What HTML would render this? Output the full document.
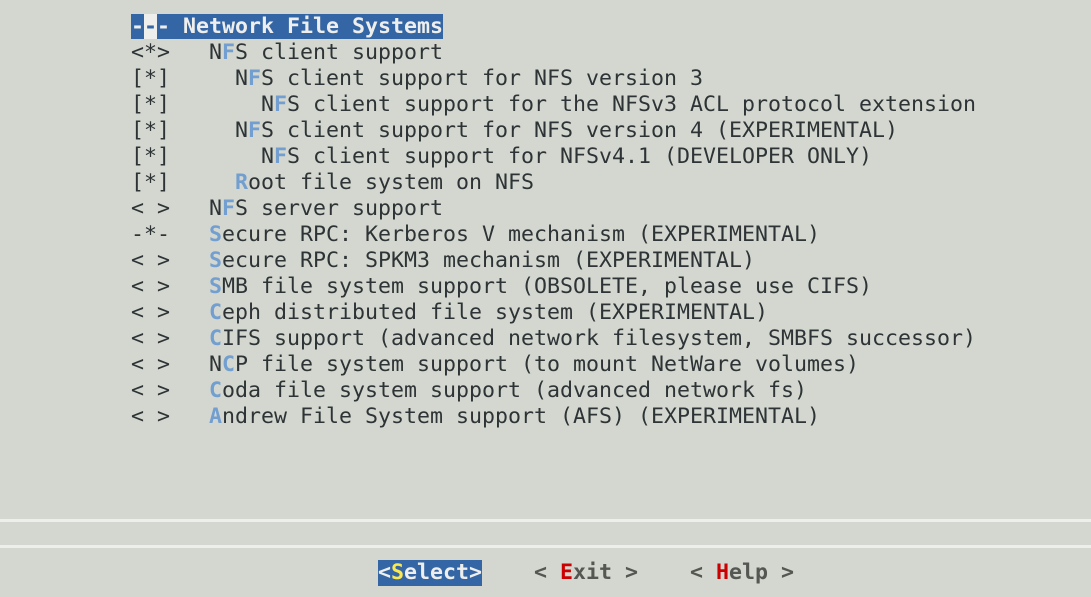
<!DOCTYPE html>
<html><head><meta charset="utf-8"><style>
html,body{margin:0;padding:0;}
body{width:1091px;height:597px;background:#d3d7cf;position:relative;overflow:hidden;font-family:"DejaVu Sans Mono","Liberation Mono",monospace;font-size:21.6px;color:#2e3436;}
pre{margin:0;position:absolute;left:131px;top:14px;font:inherit;line-height:26px;}
.k{color:#729fcf;font-weight:bold;}
.hl{background:#3465a4;color:#eeeeec;font-weight:bold;}
.cur{background:#eeeeec;color:#3465a4;}
.line{position:absolute;left:0;width:1091px;height:3px;background:#eeeeec;}
.btn{position:absolute;top:560px;line-height:26px;font-weight:bold;white-space:pre;}
.sel{background:#3465a4;color:#eeeeec;}
.y{color:#fce94f;}
.r{color:#cc0000;}
.g{color:#555753;}
</style></head><body>
<pre><span class="hl">-<span class="cur">-</span>- Network File Systems</span>
&lt;*&gt;   N<span class="k">F</span>S client support
[*]     N<span class="k">F</span>S client support for NFS version 3
[*]       N<span class="k">F</span>S client support for the NFSv3 ACL protocol extension
[*]     N<span class="k">F</span>S client support for NFS version 4 (EXPERIMENTAL)
[*]       N<span class="k">F</span>S client support for NFSv4.1 (DEVELOPER ONLY)
[*]     <span class="k">R</span>oot file system on NFS
&lt; &gt;   N<span class="k">F</span>S server support
-*-   <span class="k">S</span>ecure RPC: Kerberos V mechanism (EXPERIMENTAL)
&lt; &gt;   <span class="k">S</span>ecure RPC: SPKM3 mechanism (EXPERIMENTAL)
&lt; &gt;   <span class="k">S</span>MB file system support (OBSOLETE, please use CIFS)
&lt; &gt;   <span class="k">C</span>eph distributed file system (EXPERIMENTAL)
&lt; &gt;   <span class="k">C</span>IFS support (advanced network filesystem, SMBFS successor)
&lt; &gt;   N<span class="k">C</span>P file system support (to mount NetWare volumes)
&lt; &gt;   <span class="k">C</span>oda file system support (advanced network fs)
&lt; &gt;   <span class="k">A</span>ndrew File System support (AFS) (EXPERIMENTAL)</pre>
<div class="line" style="top:519px"></div>
<div class="line" style="top:545px"></div>
<div class="btn sel" style="left:378px">&lt;<span class="y">S</span>elect&gt;</div>
<div class="btn g" style="left:534px">&lt; <span class="r">E</span>xit &gt;</div>
<div class="btn g" style="left:690px">&lt; <span class="r">H</span>elp &gt;</div>
</body></html>
